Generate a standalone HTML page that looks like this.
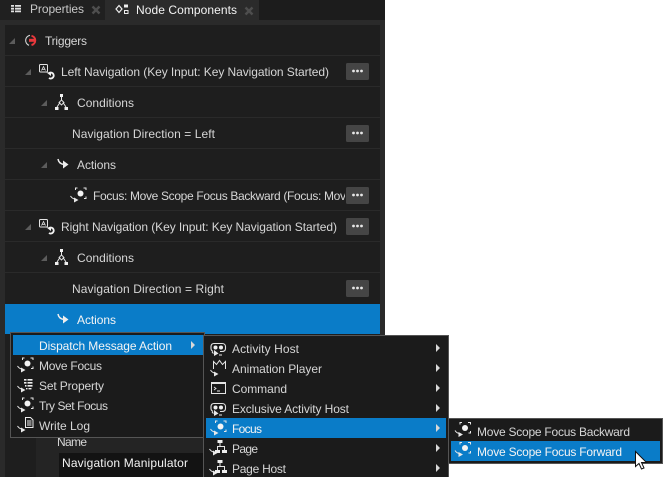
<!DOCTYPE html>
<html><head><meta charset="utf-8"><style>
html,body{margin:0;padding:0;background:#fff;width:663px;height:477px;overflow:hidden}
svg{display:block}
text{font-family:"Liberation Sans",sans-serif;font-size:12px;fill:#d6d6d6;white-space:pre}
.w{fill:#f4f4f4}
</style></head><body>
<svg width="663" height="477" viewBox="0 0 663 477" xmlns="http://www.w3.org/2000/svg">
<defs>
<clipPath id="c"><rect x="0" y="180" width="345" height="30"/></clipPath>
<g id="act"><path d="M0.500 11c1 1.500 2 2.500 4 3" fill="none" stroke="#e8e8e8" stroke-width="1"/><path d="M4 12.500v5l4.500-2.500z" fill="#e8e8e8"/></g>
<g id="focus"><use href="#act"/><circle cx="10.500" cy="8.500" r="3" fill="#f4f4f4"/><path d="M7.500 3H5.500V5M13.500 3h2.500v2M16 11.500v2h-2" fill="none" stroke="#e8e8e8" stroke-width="1"/></g>
<g id="tri"><path d="M0 6L6 0V6z" fill="#5c5c5c"/></g>
<g id="key"><rect x="1.500" y="0.500" width="8" height="7.500" rx="1" fill="none" stroke="#e4e4e4"/><path d="M3.500 6.500l2-4 2 4M4.200 5.300h2.600" fill="none" stroke="#e4e4e4" stroke-width=".8"/><path d="M10.500 9.500a3 3 0 1 1 .5 4.500" fill="none" stroke="#f2f2f2" stroke-width="1.900"/><path d="M8.500 8.500h4.500v3.500z" fill="#f2f2f2"/></g>
<g id="cond"><path d="M6.500 3v3M5 8.500L2 13M8 8.500l3 4.500" fill="none" stroke="#e8e8e8"/><rect x="5" y="0" width="3" height="3" fill="#f0f0f0"/><rect x="0" y="13" width="3.500" height="3" fill="#f0f0f0"/><rect x="9.500" y="13" width="3.500" height="3" fill="#f0f0f0"/><path d="M6.500 6l2.500 2.500-2.500 2.500-2.500-2.500z" fill="none" stroke="#e8e8e8" stroke-width=".9"/></g>
<g id="actions"><path d="M1 0c.5 3 2.500 5 6 5.500" fill="none" stroke="#eee" stroke-width="1.500"/><path d="M6 1.500l5.500 4L6 9.500z" fill="#eee"/></g>
<g id="more"><rect width="23" height="17" rx="1.500" fill="#454545"/><circle cx="7.500" cy="8" r="1.400" fill="#e6e6e6"/><circle cx="11.500" cy="8" r="1.400" fill="#e6e6e6"/><circle cx="15.500" cy="8" r="1.400" fill="#e6e6e6"/></g>
<g id="bubble"><path d="M3 10l1.500 1.500M2 4.500c0-1.800 1.200-3 3-3h8c2 0 3.500 1.200 3.500 3v2c0 2-1.500 3-3.500 3h-2" fill="none" stroke="#e4e4e4" stroke-width="1.100"/><path d="M2 4.500v2c0 1.500.7 2.300 2 3" fill="none" stroke="#e4e4e4" stroke-width="1.100"/><circle cx="6.500" cy="5.500" r="2" fill="#f0f0f0"/><circle cx="12" cy="5.500" r="2" fill="#f0f0f0"/><path d="M5 8l4.500 3.500L5 14z" fill="#e8e8e8"/><path d="M10 13h3" stroke="#e8e8e8"/></g>
<g id="tree"><use href="#act"/><rect x="8.500" y="2" width="5" height="3" fill="#eee"/><path d="M11 5v3.500M8.500 12V8.500h7V12" fill="none" stroke="#e4e4e4"/><rect x="6" y="12" width="5" height="3" fill="#eee"/><rect x="13" y="12" width="5" height="3" fill="#eee"/></g>
<path id="sub" d="M0 0l4 4-4 4z" fill="#d8d8d8"/>
</defs>

<!-- panel -->
<rect x="0" y="0" width="385" height="477" fill="#2a2a2a"/>
<rect x="0" y="0" width="385" height="20" fill="#1c1c1c"/>
<rect x="0" y="0" width="105" height="20" fill="#202020"/>
<rect x="105" y="0" width="154" height="20" fill="#2b2b2b"/>
<rect x="5" y="25" width="375" height="452" fill="#1e1e1e"/>

<!-- tabs -->
<path d="M11 5h3v1.800h-3zM15 5h6v1.800h-6zM11 7.800h3v1.800h-3zM15 7.800h6v1.800h-6zM11 10.500h3v1.800h-3zM15 10.500h6v1.800h-6z" fill="#e0e0e0"/>
<text x="30" y="13" textLength="54" lengthAdjust="spacing" style="fill:#c8c8c8">Properties</text>
<path d="M92.500 6.500l7 7M99.500 6.500l-7 7" stroke="#4e4e4e" stroke-width="2.400"/>
<path d="M119 5.500l3 3.500-3 3.500-3-3.500z" fill="none" stroke="#eee" stroke-width="1.200"/>
<rect x="124" y="4.500" width="4" height="3" fill="#eee"/><rect x="124.500" y="10.500" width="3.500" height="3" fill="none" stroke="#eee"/>
<text x="136" y="14" textLength="101" lengthAdjust="spacing" class="w">Node Components</text>
<path d="M245.500 7.500l7 7M252.500 7.500l-7 7" stroke="#4e4e4e" stroke-width="2.400"/>

<!-- rows -->
<g fill="#2a2a2a">
<rect x="5" y="55" width="375" height="1"/><rect x="5" y="86" width="375" height="1"/><rect x="5" y="117" width="375" height="1"/><rect x="5" y="148" width="375" height="1"/><rect x="5" y="179" width="375" height="1"/><rect x="5" y="210" width="375" height="1"/><rect x="5" y="241" width="375" height="1"/><rect x="5" y="272" width="375" height="1"/>
</g>
<rect x="5" y="304" width="375" height="30" fill="#0a7cc8"/>

<use href="#tri" x="9" y="38"/>
<path d="M30 35.300a5.200 5.200 0 0 0-1 10" fill="none" stroke="#d4d4d4" stroke-width="1.100"/>
<path d="M31.500 35.800a4.700 4.700 0 0 1 0 9.200" fill="none" stroke="#e8383c" stroke-width="2"/><path d="M29 38.800h6v3h-6z" fill="#e8383c"/>
<text x="45" y="45" textLength="42" lengthAdjust="spacing">Triggers</text>

<use href="#tri" x="25" y="69"/>
<use href="#key" x="38" y="64"/>
<text x="61" y="76" textLength="268" lengthAdjust="spacing">Left Navigation (Key Input: Key Navigation Started)</text>
<use href="#more" x="346" y="63"/>

<use href="#tri" x="41" y="100"/>
<use href="#cond" x="55" y="94"/>
<text x="77" y="107" textLength="57" lengthAdjust="spacing">Conditions</text>

<text x="72" y="138" textLength="143" lengthAdjust="spacing">Navigation Direction = Left</text>
<use href="#more" x="346" y="125"/>

<use href="#tri" x="41" y="162"/>
<use href="#actions" x="57" y="159"/>
<text x="77" y="169" textLength="39" lengthAdjust="spacing">Actions</text>

<use href="#focus" x="70" y="185"/>
<g clip-path="url(#c)"><text x="93" y="200" textLength="253" lengthAdjust="spacing">Focus: Move Scope Focus Backward (Focus: Mov</text></g>
<use href="#more" x="346" y="187"/>

<use href="#tri" x="25" y="224"/>
<use href="#key" x="38" y="219"/>
<text x="61" y="231" textLength="276" lengthAdjust="spacing">Right Navigation (Key Input: Key Navigation Started)</text>
<use href="#more" x="346" y="218"/>

<use href="#tri" x="41" y="255"/>
<use href="#cond" x="55" y="249"/>
<text x="77" y="262" textLength="57" lengthAdjust="spacing">Conditions</text>

<text x="72" y="293" textLength="152" lengthAdjust="spacing">Navigation Direction = Right</text>
<use href="#more" x="346" y="280"/>

<use href="#actions" x="57" y="314"/>
<text x="77" y="324" textLength="39" lengthAdjust="spacing" class="w">Actions</text>

<!-- below menu -->
<rect x="36" y="438" width="344" height="39" fill="#242424"/>
<text x="57" y="446" textLength="30" lengthAdjust="spacing">Name</text>
<rect x="59" y="453" width="146" height="24" fill="#131313"/>
<text x="62" y="467" textLength="126" lengthAdjust="spacing" class="w">Navigation Manipulator</text>

<!-- menu 1 -->
<rect x="10.500" y="332.500" width="194" height="105" fill="#1b1b1b" stroke="#555"/>
<rect x="13" y="335" width="190" height="20" fill="#0a7cc8"/>
<text x="39" y="350" textLength="133" lengthAdjust="spacing" class="w">Dispatch Message Action</text>
<use href="#sub" x="191" y="341"/>
<use href="#focus" x="17" y="355"/>
<text x="39" y="370" textLength="63" lengthAdjust="spacing">Move Focus</text>
<use href="#act" x="17" y="375"/>
<path d="M24 379h2.500v1.600h-2.500zM27.500 379h5v1.600h-5zM24 382h2.500v1.600h-2.500zM27.500 382h5v1.600h-5zM25 385h1.500v1.600h-1.500zM27.500 385h5v1.600h-5zM26 388h1.500v1.400h-1.500zM28.500 388h3v1.400h-3z" fill="#eee"/>
<text x="39" y="390" textLength="65" lengthAdjust="spacing">Set Property</text>
<use href="#focus" x="17" y="395"/>
<text x="39" y="410" textLength="69" lengthAdjust="spacing">Try Set Focus</text>
<use href="#act" x="17" y="415"/>
<path d="M25.500 417.500h5l2.500 2.500v7.500h-7.500z" fill="none" stroke="#eee"/><path d="M27 421h4.500M27 423h4.500M27 425h4.500" stroke="#eee"/>
<text x="39" y="430" textLength="51" lengthAdjust="spacing">Write Log</text>

<!-- menu 2 -->
<rect x="203.500" y="335.500" width="245" height="150" fill="#1b1b1b" stroke="#555"/>
<rect x="206" y="418" width="240" height="20" fill="#0a7cc8"/>
<use href="#bubble" x="209" y="342"/>
<text x="232" y="353" textLength="67" lengthAdjust="spacing">Activity Host</text>
<use href="#sub" x="436" y="344"/>
<use href="#act" x="210" y="359"/><path d="M213.500 369v-7.500l3 3 3-4 3 4 3-3v7.500" fill="none" stroke="#e4e4e4"/>
<text x="232" y="373" textLength="90" lengthAdjust="spacing">Animation Player</text>
<use href="#sub" x="436" y="364"/>
<rect x="211.500" y="382.500" width="14" height="11" fill="none" stroke="#e4e4e4"/><rect x="211" y="382" width="15" height="2" fill="#e4e4e4"/><path d="M214 387l2 1.500-2 1.500M217 391h3" fill="none" stroke="#e4e4e4" stroke-width=".9"/>
<text x="232" y="393" textLength="55" lengthAdjust="spacing">Command</text>
<use href="#sub" x="436" y="384"/>
<use href="#bubble" x="209" y="402"/>
<text x="232" y="413" textLength="117" lengthAdjust="spacing">Exclusive Activity Host</text>
<use href="#sub" x="436" y="404"/>
<use href="#focus" x="210" y="418"/>
<text x="232" y="433" textLength="30" lengthAdjust="spacing" class="w">Focus</text>
<use href="#sub" x="436" y="424"/>
<use href="#tree" x="209" y="438"/>
<text x="232" y="453" textLength="26" lengthAdjust="spacing">Page</text>
<use href="#sub" x="436" y="444"/>
<use href="#tree" x="209" y="458"/>
<text x="232" y="473" textLength="54" lengthAdjust="spacing">Page Host</text>
<use href="#sub" x="436" y="464"/>

<!-- menu 3 -->
<rect x="448.500" y="418.500" width="214" height="45" fill="#1b1b1b" stroke="#555"/>
<rect x="451" y="441" width="209" height="20" fill="#0a7cc8"/>
<use href="#focus" x="454.500" y="419.500"/>
<text x="477" y="436" textLength="153" lengthAdjust="spacing">Move Scope Focus Backward</text>
<use href="#focus" x="454.500" y="439.500"/>
<text x="477" y="456" textLength="145" lengthAdjust="spacing" class="w">Move Scope Focus Forward</text>

<!-- cursor -->
<path d="M635.500 451.500v15l3.500-3 2.500 5.500 2.500-1-2.500-5.500h5z" fill="#fff" stroke="#111" stroke-width="1"/>
</svg>
</body></html>
